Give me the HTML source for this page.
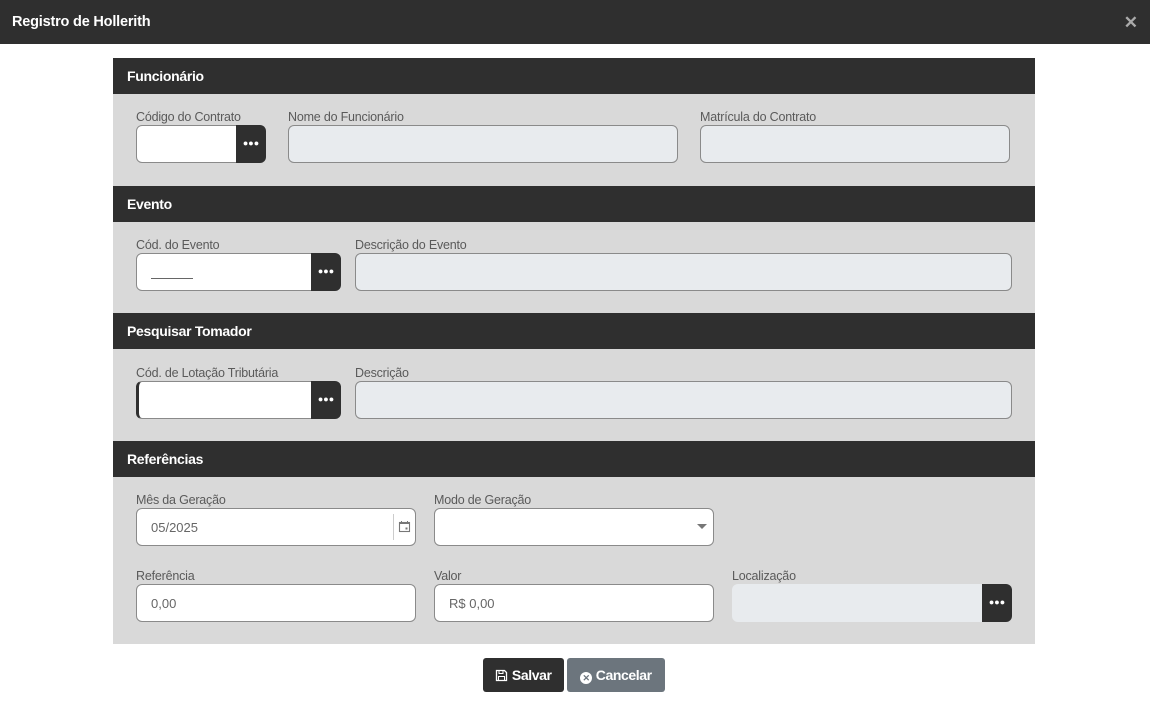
<!DOCTYPE html><html><head><meta charset="utf-8"><style>
*{box-sizing:border-box;margin:0;padding:0}
body{width:1150px;height:703px;background:#fff;font-family:"Liberation Sans",Arial,sans-serif;position:relative;overflow:hidden}
.a{position:absolute}
.top{left:0;top:0;width:1150px;height:44px;background:#2f2f2f;color:#fff;font-weight:bold;font-size:14.5px;padding:14px 12px;letter-spacing:-0.2px}
.x{right:12px;top:13px;color:#aaa;font-size:17px;font-weight:bold}
.panel{left:113px;top:58px;width:922px;height:586px;background:#d9d9d9}
.hd{left:113px;width:922px;height:36px;background:#2f2f2f;color:#fff;font-weight:bold;font-size:14px;padding:10px 14px;letter-spacing:-0.3px}
.lb{font-size:12.5px;color:#5a5a5a;letter-spacing:-0.2px}
.in{height:38px;border:1px solid #8a8a8a;border-radius:6px;background:#fff;font-size:13px;color:#666;padding:11px 14px}
.dis{background:#e8ebee}
.bt{height:38px;width:30px;background:#2f2f2f;border-radius:0 6px 6px 0;color:#fff;font-size:9px;font-weight:bold;text-align:center;line-height:37px;letter-spacing:0}
.btn{height:34px;border-radius:3px;color:#fff;font-weight:bold;font-size:14px;line-height:34px;text-align:center;letter-spacing:-0.4px}
</style></head><body>
<div class="a top">Registro de Hollerith</div><div class="a x">✕</div>
<div class="a panel"></div>
<div class="a hd" style="top:58px">Funcionário</div>
<div class="a hd" style="top:186px">Evento</div>
<div class="a hd" style="top:313px">Pesquisar Tomador</div>
<div class="a hd" style="top:441px">Referências</div>

<div class="a lb" style="left:136px;top:110px">Código do Contrato</div>
<div class="a in" style="left:136px;top:125px;width:104px;border-radius:6px 0 0 6px"></div><div class="a bt" style="left:236px;top:125px">●●●</div>
<div class="a lb" style="left:288px;top:110px">Nome do Funcionário</div>
<div class="a in dis" style="left:288px;top:125px;width:390px"></div>
<div class="a lb" style="left:700px;top:110px">Matrícula do Contrato</div>
<div class="a in dis" style="left:700px;top:125px;width:310px"></div>

<div class="a lb" style="left:136px;top:238px">Cód. do Evento</div>
<div class="a in" style="left:136px;top:253px;width:180px;border-radius:6px 0 0 6px"><div style="margin-top:13px;width:42px;border-top:1px solid #666"></div></div><div class="a bt" style="left:311px;top:253px">●●●</div>
<div class="a lb" style="left:355px;top:238px">Descrição do Evento</div>
<div class="a in dis" style="left:355px;top:253px;width:657px"></div>

<div class="a lb" style="left:136px;top:366px">Cód. de Lotação Tributária</div>
<div class="a in" style="left:136px;top:381px;width:180px;border-radius:6px 0 0 6px;border-left:3px solid #2f2f2f"></div><div class="a bt" style="left:311px;top:381px">●●●</div>
<div class="a lb" style="left:355px;top:366px">Descrição</div>
<div class="a in dis" style="left:355px;top:381px;width:657px"></div>

<div class="a lb" style="left:136px;top:493px">Mês da Geração</div>
<div class="a in" style="left:136px;top:508px;width:280px">05/2025</div>
<div class="a" style="left:393px;top:514px;height:26px;border-left:1px solid #ccc"></div>
<svg class="a" style="left:398px;top:520px" width="13" height="13" viewBox="0 0 13 13"><rect x="1.5" y="2.5" width="10" height="9" fill="none" stroke="#777" stroke-width="1.1"/><rect x="1.5" y="2.5" width="10" height="1.5" fill="#777"/><rect x="3" y="1" width="1" height="2" fill="#777"/><rect x="9" y="1" width="1" height="2" fill="#777"/><rect x="7.5" y="7.5" width="2" height="2" fill="#777"/></svg>
<div class="a lb" style="left:434px;top:493px">Modo de Geração</div>
<div class="a in" style="left:434px;top:508px;width:280px"></div>
<div class="a" style="left:697px;top:524px;border-left:5px solid transparent;border-right:5px solid transparent;border-top:5px solid #777"></div>

<div class="a lb" style="left:136px;top:569px">Referência</div>
<div class="a in" style="left:136px;top:584px;width:280px">0,00</div>
<div class="a lb" style="left:434px;top:569px">Valor</div>
<div class="a in" style="left:434px;top:584px;width:280px">R$ 0,00</div>
<div class="a lb" style="left:732px;top:569px">Localização</div>
<div class="a in dis" style="left:732px;top:584px;width:254px;border:none;border-radius:6px 0 0 6px"></div><div class="a bt" style="left:982px;top:584px">●●●</div>

<div class="a btn" style="left:483px;top:658px;width:81px;background:#2f2f2f"><svg width="13" height="13" viewBox="0 0 13 13" style="vertical-align:-2px"><path d="M1.5 1.5h8l2 2v8h-10z" fill="none" stroke="#fff" stroke-width="1.3"/><rect x="4" y="1.5" width="4" height="3" fill="none" stroke="#fff"/><rect x="3.5" y="7.5" width="6" height="4" fill="none" stroke="#fff"/></svg> Salvar</div>
<div class="a btn" style="left:567px;top:658px;width:98px;background:#6c757d"><span style="display:inline-block;width:12px;height:12px;border-radius:50%;background:#fff;color:#6c757d;font-size:9px;line-height:12px;vertical-align:-1px;letter-spacing:0">✕</span> Cancelar</div>
</body></html>
